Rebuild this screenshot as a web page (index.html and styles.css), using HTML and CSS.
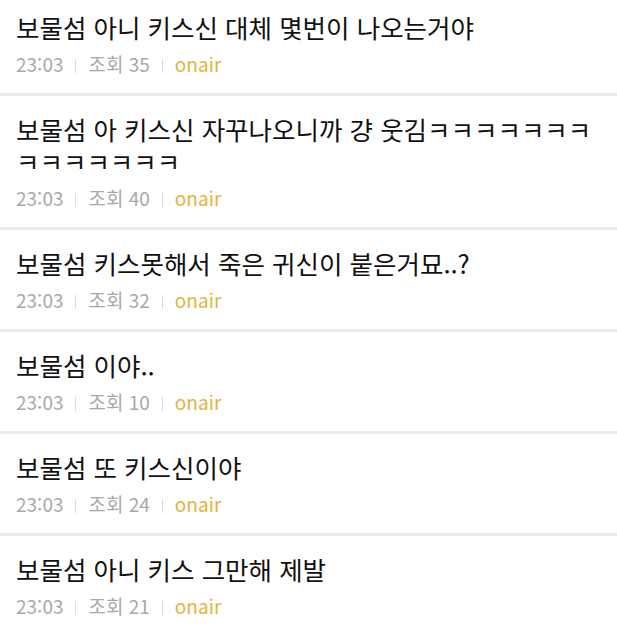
FILE: index.html
```html
<!DOCTYPE html>
<html lang="ko">
<head>
    <meta charset="UTF-8">
    <meta name="viewport" content="width=device-width, initial-scale=1.0">
    <title>게시판 - onair</title>
    <link rel="stylesheet" href="styles.css">
</head>
<body>
    <ul class="post-list">
        <li class="post">
            <p class="post-title">보물섬 아니 키스신 대체 몇번이 나오는거야</p>
            <div class="post-meta">
                <span class="time">23:03</span>
                <span class="views">조회 35</span>
                <span class="board">onair</span>
            </div>
        </li>
        <li class="post">
            <p class="post-title">보물섬 아 키스신 자꾸나오니까 걍 웃김ㅋㅋㅋㅋㅋㅋㅋㅋㅋㅋㅋㅋㅋㅋ</p>
            <div class="post-meta">
                <span class="time">23:03</span>
                <span class="views">조회 40</span>
                <span class="board">onair</span>
            </div>
        </li>
        <li class="post">
            <p class="post-title">보물섬 키스못해서 죽은 귀신이 붙은거묘..?</p>
            <div class="post-meta">
                <span class="time">23:03</span>
                <span class="views">조회 32</span>
                <span class="board">onair</span>
            </div>
        </li>
        <li class="post">
            <p class="post-title">보물섬 이야..</p>
            <div class="post-meta">
                <span class="time">23:03</span>
                <span class="views">조회 10</span>
                <span class="board">onair</span>
            </div>
        </li>
        <li class="post">
            <p class="post-title">보물섬 또 키스신이야</p>
            <div class="post-meta">
                <span class="time">23:03</span>
                <span class="views">조회 24</span>
                <span class="board">onair</span>
            </div>
        </li>
        <li class="post">
            <p class="post-title">보물섬 아니 키스 그만해 제발</p>
            <div class="post-meta">
                <span class="time">23:03</span>
                <span class="views">조회 21</span>
                <span class="board">onair</span>
            </div>
        </li>
    </ul>
</body>
</html>
```

FILE: styles.css
```css
body {
    margin: 0;
    background-color: #fff;
    font-family: "Noto Sans CJK KR", "Noto Sans", sans-serif;
}
.post-list {
    list-style: none;
    margin: -6px 0 0 0;
    padding: 0;
}
.post {
    padding: 17px 16px 17px 16px;
    border-bottom: 3px solid #ebebeb;
}
.post-title {
    margin: 0;
    font-size: 25.5px;
    font-weight: 400;
    line-height: 32px;
    color: #111;
    word-break: break-all;
}
.post-meta {
    display: flex;
    align-items: center;
    margin-top: 9px;
    font-size: 19px;
    line-height: 24px;
    color: #a8a8a8;
}
.post-meta span + span::before {
    content: "";
    display: inline-block;
    width: 1px;
    height: 14px;
    margin: 0 12px;
    background-color: #dcdcdc;
    vertical-align: -1px;
}
.board {
    color: #e2b441;
}
```
